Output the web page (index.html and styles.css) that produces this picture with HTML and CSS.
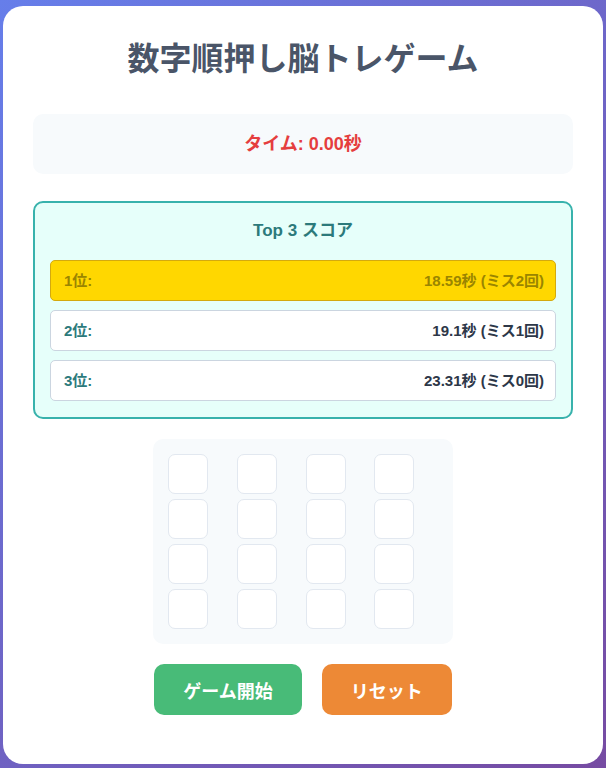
FILE: index.html
```html
<!DOCTYPE html>
<html lang="ja">
<head>
<meta charset="utf-8">
<title>数字順押し脳トレゲーム</title>
<link rel="stylesheet" href="styles.css">
</head>
<body>
<div class="card">
  <h1 class="title">数字順押し脳トレゲーム</h1>
  <div class="timer">タイム: 0.00秒</div>
  <div class="scores">
    <div class="scores-title">Top 3 スコア</div>
    <div class="score-list">
      <div class="score-row first"><span class="rank">1位:</span><span class="value">18.59秒 (ミス2回)</span></div>
      <div class="score-row"><span class="rank">2位:</span><span class="value">19.1秒 (ミス1回)</span></div>
      <div class="score-row"><span class="rank">3位:</span><span class="value">23.31秒 (ミス0回)</span></div>
    </div>
  </div>
  <div class="board">
    <div class="cell"></div><div class="cell"></div><div class="cell"></div><div class="cell"></div>
    <div class="cell"></div><div class="cell"></div><div class="cell"></div><div class="cell"></div>
    <div class="cell"></div><div class="cell"></div><div class="cell"></div><div class="cell"></div>
    <div class="cell"></div><div class="cell"></div><div class="cell"></div><div class="cell"></div>
  </div>
  <div class="buttons">
    <button class="btn start">ゲーム開始</button>
    <button class="btn reset">リセット</button>
  </div>
</div>
</body>
</html>
```
FILE: styles.css
```css
* { box-sizing: border-box; }
html, body { margin: 0; }
body {
  min-height: 768px;
  padding: 6px 3px 4px;
  background: linear-gradient(135deg, #667eea 0%, #764ba2 100%);
  font-family: "Liberation Sans", "Noto Sans CJK JP", sans-serif;
}
.card {
  width: 600px;
  height: 758px;
  background: #ffffff;
  border-radius: 20px;
  padding: 34px 30px 30px;
}
.title {
  margin: 0 0 36px;
  font-size: 32px;
  line-height: 38px;
  font-weight: bold;
  text-align: center;
  color: #4a5568;
}
.timer {
  height: 60px;
  padding: 20px;
  background: #f7fafc;
  border-radius: 10px;
  text-align: center;
  font-size: 18px;
  line-height: 20px;
  font-weight: bold;
  color: #e53e3e;
  margin-bottom: 27px;
}
.scores {
  background: #e6fffa;
  border: 2px solid #38b2ac;
  border-radius: 10px;
  padding: 18px 15px 16px;
  margin-bottom: 20px;
}
.scores-title {
  text-align: center;
  font-size: 17px;
  line-height: 20px;
  font-weight: bold;
  color: #2c7a7b;
  margin-bottom: 19px;
}
.score-list {
  display: flex;
  flex-direction: column;
  gap: 9px;
}
.score-row {
  display: flex;
  justify-content: space-between;
  height: 41px;
  padding: 0 11px 0 13px;
  background: #ffffff;
  border: 1px solid #cbd5e0;
  border-radius: 5px;
  font-size: 15px;
  line-height: 39px;
  font-weight: bold;
}
.rank { color: #2c7a7b; }
.value { color: #2d3748; }
.score-row.first {
  background: #ffd700;
  border-color: #d4a90e;
}
.score-row.first .rank,
.score-row.first .value { color: #9a8500; }
.board {
  width: 300px;
  margin: 0 auto 20px;
  padding: 15px;
  background: #f7fafc;
  border-radius: 10px;
  display: grid;
  grid-template-columns: repeat(4, 1fr);
  gap: 5px;
}
.cell {
  width: 40px;
  height: 40px;
  background: #ffffff;
  border: 1px solid #e2e8f0;
  border-radius: 7px;
}
.buttons {
  display: flex;
  justify-content: center;
  gap: 20px;
}
.btn {
  height: 51px;
  padding: 0 29px;
  border: none;
  border-radius: 10px;
  font-family: "Liberation Sans", "Noto Sans CJK JP", sans-serif;
  font-size: 18px;
  font-weight: bold;
  color: #ffffff;
}
.start { background: #48bb78; }
.reset { background: #ed8936; }
```
